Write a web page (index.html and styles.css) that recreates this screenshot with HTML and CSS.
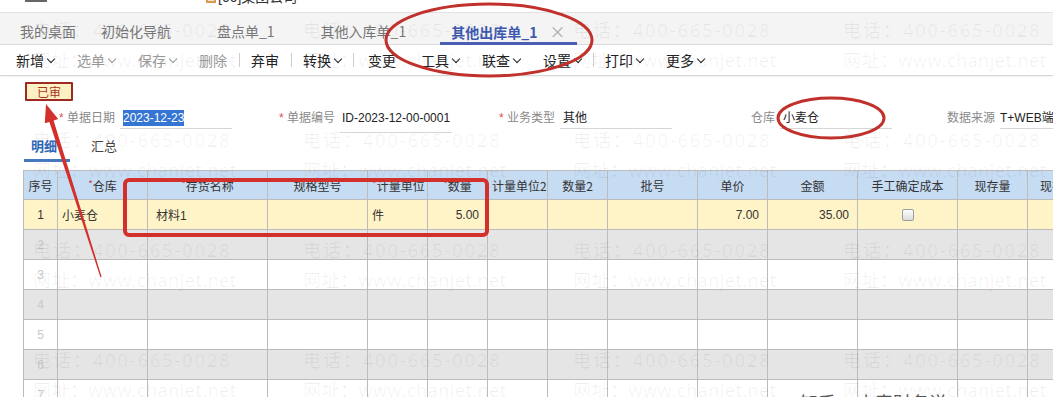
FILE: index.html
```html
<!DOCTYPE html>
<html lang="zh-CN">
<head>
    <meta charset="UTF-8">
    <meta name="viewport" content="width=device-width, initial-scale=1.0">
    <title>其他出库单_1</title>
    <link rel="stylesheet" href="styles.css">
</head>
<body>

<div class="page">
    <div class="topbar">
        <span class="logo-stub"></span>
        <span class="corp"><span class="corp-icon"></span>[00]集团公司</span>
    </div>

    <div class="tabbar">
        <span class="tab tab-home">我的桌面</span>
        <span class="tab">初始化导航</span>
        <span class="tab">盘点单_1</span>
        <span class="tab">其他入库单_1</span>
        <span class="tab tab-active">其他出库单_1<span class="tab-close">×</span></span>
    </div>

    <div class="toolbar">
        <span class="tb drop">新增</span>
        <span class="tb drop off">选单</span>
        <span class="tb drop off">保存</span>
        <span class="tb off">删除</span>
        <span class="tb-sep"></span>
        <span class="tb">弃审</span>
        <span class="tb-sep"></span>
        <span class="tb drop">转换</span>
        <span class="tb-sep"></span>
        <span class="tb tb-change">变更</span>
        <span class="tb drop tb-tools">工具</span>
        <span class="tb drop">联查</span>
        <span class="tb drop">设置</span>
        <span class="tb-sep"></span>
        <span class="tb drop">打印</span>
        <span class="tb drop">更多</span>
    </div>

    <div class="content">
        <div class="badge">已审</div>

        <div class="head-form">
            <div class="field">
                <label><em>*</em> 单据日期</label>
                <div class="value"><span class="selected">2023-12-23</span></div>
            </div>
            <div class="field">
                <label><em>*</em> 单据编号</label>
                <div class="value value-code">ID-2023-12-00-0001</div>
            </div>
            <div class="field">
                <label><em>*</em> 业务类型</label>
                <div class="value">其他</div>
            </div>
            <div class="field">
                <label>仓库</label>
                <div class="value">小麦仓</div>
            </div>
            <div class="field">
                <label>数据来源</label>
                <div class="value value-src">T+WEB端</div>
            </div>
        </div>

        <div class="subtabs">
            <span class="subtab active">明细</span>
            <span class="subtab">汇总</span>
        </div>

        <table class="grid">
            <colgroup>
                <col style="width:34px"><col style="width:90px"><col style="width:120px">
                <col style="width:100px"><col style="width:60px"><col style="width:60px">
                <col style="width:60px"><col style="width:60px"><col style="width:90px">
                <col style="width:70px"><col style="width:90px"><col style="width:100px">
                <col style="width:70px"><col style="width:70px">
            </colgroup>
            <tr>
                <th>序号</th>
                <th><i>*</i>仓库</th>
                <th><i>*</i>存货名称</th>
                <th>规格型号</th>
                <th><i>*</i>计量单位</th>
                <th><i>*</i>数量</th>
                <th>计量单位2</th>
                <th>数量2</th>
                <th>批号</th>
                <th>单价</th>
                <th>金额</th>
                <th>手工确定成本</th>
                <th>现存量</th>
                <th class="cut">现存</th>
            </tr>
            <tr class="row-current">
                <td class="num">1</td>
                <td>小麦仓</td>
                <td class="pad">材料1</td>
                <td></td>
                <td>件</td>
                <td class="amount">5.00</td>
                <td></td>
                <td></td>
                <td></td>
                <td class="amount">7.00</td>
                <td class="amount">35.00</td>
                <td class="center"><span class="check"></span></td>
                <td></td>
                <td></td>
            </tr>
            <tr class="row-alt"><td class="num faint">2</td><td></td><td></td><td></td><td></td><td></td><td></td><td></td><td></td><td></td><td></td><td></td><td></td><td></td></tr>
            <tr><td class="num faint">3</td><td></td><td></td><td></td><td></td><td></td><td></td><td></td><td></td><td></td><td></td><td></td><td></td><td></td></tr>
            <tr class="row-alt"><td class="num faint">4</td><td></td><td></td><td></td><td></td><td></td><td></td><td></td><td></td><td></td><td></td><td></td><td></td><td></td></tr>
            <tr><td class="num faint">5</td><td></td><td></td><td></td><td></td><td></td><td></td><td></td><td></td><td></td><td></td><td></td><td></td><td></td></tr>
            <tr class="row-alt"><td class="num faint">6</td><td></td><td></td><td></td><td></td><td></td><td></td><td></td><td></td><td></td><td></td><td></td><td></td><td></td></tr>
            <tr><td class="num faint">7</td><td></td><td></td><td></td><td></td><td></td><td></td><td></td><td></td><td></td><td></td><td></td><td></td><td></td></tr>
        </table>
    </div>

    <!-- 水印 -->
    <div class="watermark">
        <div class="wm"><p>电话：400-665-0028</p><p>网址：www.chanjet.net</p></div>
        <div class="wm"><p>电话：400-665-0028</p><p>网址：www.chanjet.net</p></div>
        <div class="wm"><p>电话：400-665-0028</p><p>网址：www.chanjet.net</p></div>
        <div class="wm"><p>电话：400-665-0028</p><p>网址：www.chanjet.net</p></div>
        <div class="wm"><p>电话：400-665-0028</p><p>网址：www.chanjet.net</p></div>
        <div class="wm"><p>电话：400-665-0028</p><p>网址：www.chanjet.net</p></div>
        <div class="wm"><p>电话：400-665-0028</p><p>网址：www.chanjet.net</p></div>
        <div class="wm"><p>电话：400-665-0028</p><p>网址：www.chanjet.net</p></div>
        <div class="wm"><p>电话：400-665-0028</p><p>网址：www.chanjet.net</p></div>
        <div class="wm"><p>电话：400-665-0028</p><p>网址：www.chanjet.net</p></div>
        <div class="wm"><p>电话：400-665-0028</p><p>网址：www.chanjet.net</p></div>
        <div class="wm"><p>电话：400-665-0028</p><p>网址：www.chanjet.net</p></div>
        <div class="wm"><p>电话：400-665-0028</p><p>网址：www.chanjet.net</p></div>
        <div class="wm"><p>电话：400-665-0028</p><p>网址：www.chanjet.net</p></div>
        <div class="wm"><p>电话：400-665-0028</p><p>网址：www.chanjet.net</p></div>
        <div class="wm"><p>电话：400-665-0028</p><p>网址：www.chanjet.net</p></div>
    </div>

    <div class="signature">知乎 @小麦财务说</div>

    <!-- 红色标注 -->
    <svg class="marks" width="1053" height="397" viewBox="0 0 1053 397">
        <ellipse cx="489" cy="40" rx="103" ry="36" fill="none" stroke="#c0312b" stroke-width="3"/>
        <ellipse cx="831" cy="118" rx="53" ry="20" fill="none" stroke="#c0312b" stroke-width="3"/>
        <rect x="125" y="180" width="362" height="55" rx="4" fill="none" stroke="#d3302c" stroke-width="4"/>
        <polygon points="46,104 58.2,119.1 53.6,120.5 101.6,276.8 100.4,277.2 49.4,121.9 44.8,123.3" fill="#d3302c"/>
    </svg>
</div>

</body>
</html>
```

FILE: styles.css
```css
* {
    box-sizing: border-box;
}
body {
    margin: 0;
    font-family: "Liberation Sans", "Noto Sans CJK SC", sans-serif;
    font-size: 12px;
    color: #333;
    background-color: #fff;
}
.page {
    position: relative;
    width: 1053px;
    height: 397px;
    overflow: hidden;
}

/* 顶部 */
.topbar {
    height: 12px;
    overflow: hidden;
    position: relative;
}
.logo-stub {
    position: absolute;
    left: 25px;
    top: 0;
    width: 22px;
    height: 2px;
    background-color: #666;
}
.corp {
    display: block;
    margin-left: 206px;
    margin-top: -11px;
    font-size: 14px;
    line-height: 16px;
    color: #333;
}
.corp-icon {
    display: inline-block;
    width: 10px;
    height: 12px;
    margin-right: 2px;
    border: 2px solid #d89a5a;
    background-color: #f7e2c8;
    vertical-align: -1px;
}

/* 页签 */
.tabbar {
    height: 32px;
    display: flex;
    padding-left: 20px;
    padding-top: 8px;
    background-color: #f4f4f4;
    border-top: 1px solid #e2e2e2;
}
.tab {
    font-family: "Noto Sans CJK SC", sans-serif;
    font-size: 14px;
    line-height: 21px;
    height: 24px;
    color: #777;
    margin-right: 46px;
    white-space: nowrap;
}
.tab-home {
    margin-right: 25px;
}
.tab-active {
    margin-left: -12px;
    padding: 0 12px 0 11px;
    color: #3e58b0;
    font-weight: bold;
    border-bottom: 3px solid #4a5eb5;
}
.tab-close {
    font-weight: normal;
    color: #aaa;
    font-size: 16px;
    margin-left: 12px;
}

/* 工具栏 */
.toolbar {
    height: 32px;
    display: flex;
    align-items: center;
    padding-left: 4.5px;
    background-color: #fff;
    border-top: 1px solid #dcdcdc;
    border-bottom: 1px solid #d6d6d6;
    box-shadow: 0 1px 2px rgba(0, 0, 0, 0.06);
}
.tb {
    font-family: "Noto Sans CJK SC", sans-serif;
    font-size: 14px;
    color: #222;
    padding: 0 11.5px;
    white-space: nowrap;
}
.tb.off {
    color: #9a9a9a;
}
.tb.drop::after {
    content: "";
    display: inline-block;
    width: 5px;
    height: 5px;
    margin-left: 4px;
    border-right: 1.6px solid currentColor;
    border-bottom: 1.6px solid currentColor;
    transform: rotate(45deg);
    vertical-align: 4px;
}
.tb-change {
    margin-left: 3px;
}
.tb-tools {
    margin-left: 2px;
}
.tb-sep {
    width: 1px;
    height: 14px;
    background-color: #ccc;
}

/* 表头 */
.content {
    padding-top: 6px;
}
.badge {
    margin-left: 25px;
    width: 48px;
    height: 19px;
    line-height: 15px;
    text-align: center;
    font-family: "Noto Sans CJK SC", sans-serif;
    font-size: 12px;
    color: #a9321f;
    background-color: #fdf0c2;
    border: 2px solid #9c2a22;
    border-radius: 1px;
}
.head-form {
    display: grid;
    grid-template-columns: repeat(5, 220px);
    margin-top: 7px;
    padding-left: 12px;
}
.field {
    display: flex;
    height: 21px;
}
.field label {
    width: 108px;
    padding-right: 5px;
    text-align: right;
    line-height: 20px;
    color: #8a8a8a;
}
.field label em {
    font-style: normal;
    color: #e05050;
}
.value {
    width: 112px;
    padding-left: 3px;
    line-height: 20px;
    color: #222;
    border-bottom: 1px solid #d6d6d6;
    white-space: nowrap;
}
.value-code {
    padding-left: 2px;
    height: 25px;
}
.value-src {
    padding-left: 0;
}
.selected {
    background-color: #3575d3;
    color: #fff;
    padding: 1px 0;
}

.subtabs {
    display: flex;
    margin-top: 4px;
    margin-left: 24px;
    height: 29px;
}
.subtab {
    font-family: "Noto Sans CJK SC", sans-serif;
    font-size: 13px;
    line-height: 26px;
    color: #444;
    padding-left: 7px;
    width: 46px;
}
.subtab.active {
    color: #2f68b8;
    font-weight: bold;
    border-bottom: 3px solid #4579bf;
    margin-right: 14px;
}

/* 明细表 */
.grid {
    border-collapse: collapse;
    table-layout: fixed;
    width: 1064px;
    margin-top: 8px;
    margin-left: 23px;
}
.grid th, .grid td {
    border: 1px solid #bcbcbc;
    height: 30px;
    padding: 0 4px;
    white-space: nowrap;
    overflow: hidden;
    font-weight: normal;
    color: #333;
}
.grid th {
    height: 29px;
    background-color: #c6dcf3;
    text-align: center;
    font-family: "Noto Sans CJK SC", sans-serif;
}
.grid th i {
    font-style: normal;
    color: #d04040;
    font-size: 10px;
    vertical-align: 3px;
}
.grid th.cut {
    text-align: left;
    padding-left: 12px;
}
.row-current td {
    background-color: #fff4c8;
}
.row-alt td {
    background-color: #e5e5e5;
}
.grid td.num {
    text-align: center;
}
.grid td.faint {
    color: #c9c9c9;
}
.grid td.pad {
    padding-left: 8px;
}
.grid td.amount {
    text-align: right;
    padding-right: 8px;
}
.grid td.center {
    text-align: center;
}
.check {
    display: inline-block;
    width: 12px;
    height: 12px;
    border: 1px solid #9c9c9c;
    border-radius: 2px;
    background: linear-gradient(#fdfdfd, #dcdcdc);
    vertical-align: middle;
}

/* 水印 */
.watermark {
    position: absolute;
    left: 33px;
    top: 15px;
    display: grid;
    grid-template-columns: repeat(4, 270px);
    grid-auto-rows: 110px;
    pointer-events: none;
}
.wm p {
    margin: 0;
    height: 30px;
    line-height: 30px;
    font-family: "Open Sans", "Noto Sans CJK SC", sans-serif;
    font-size: 18px;
    letter-spacing: 2px;
    color: rgba(0, 0, 0, 0.06);
    white-space: nowrap;
}
.wm p + p {
    letter-spacing: 0.5px;
}

.signature {
    position: absolute;
    left: 800px;
    top: 389px;
    font-family: "Noto Sans CJK SC", sans-serif;
    font-size: 18px;
    color: #555;
    white-space: nowrap;
}

/* 标注 */
.marks {
    position: absolute;
    left: 0;
    top: 0;
    pointer-events: none;
}
```
